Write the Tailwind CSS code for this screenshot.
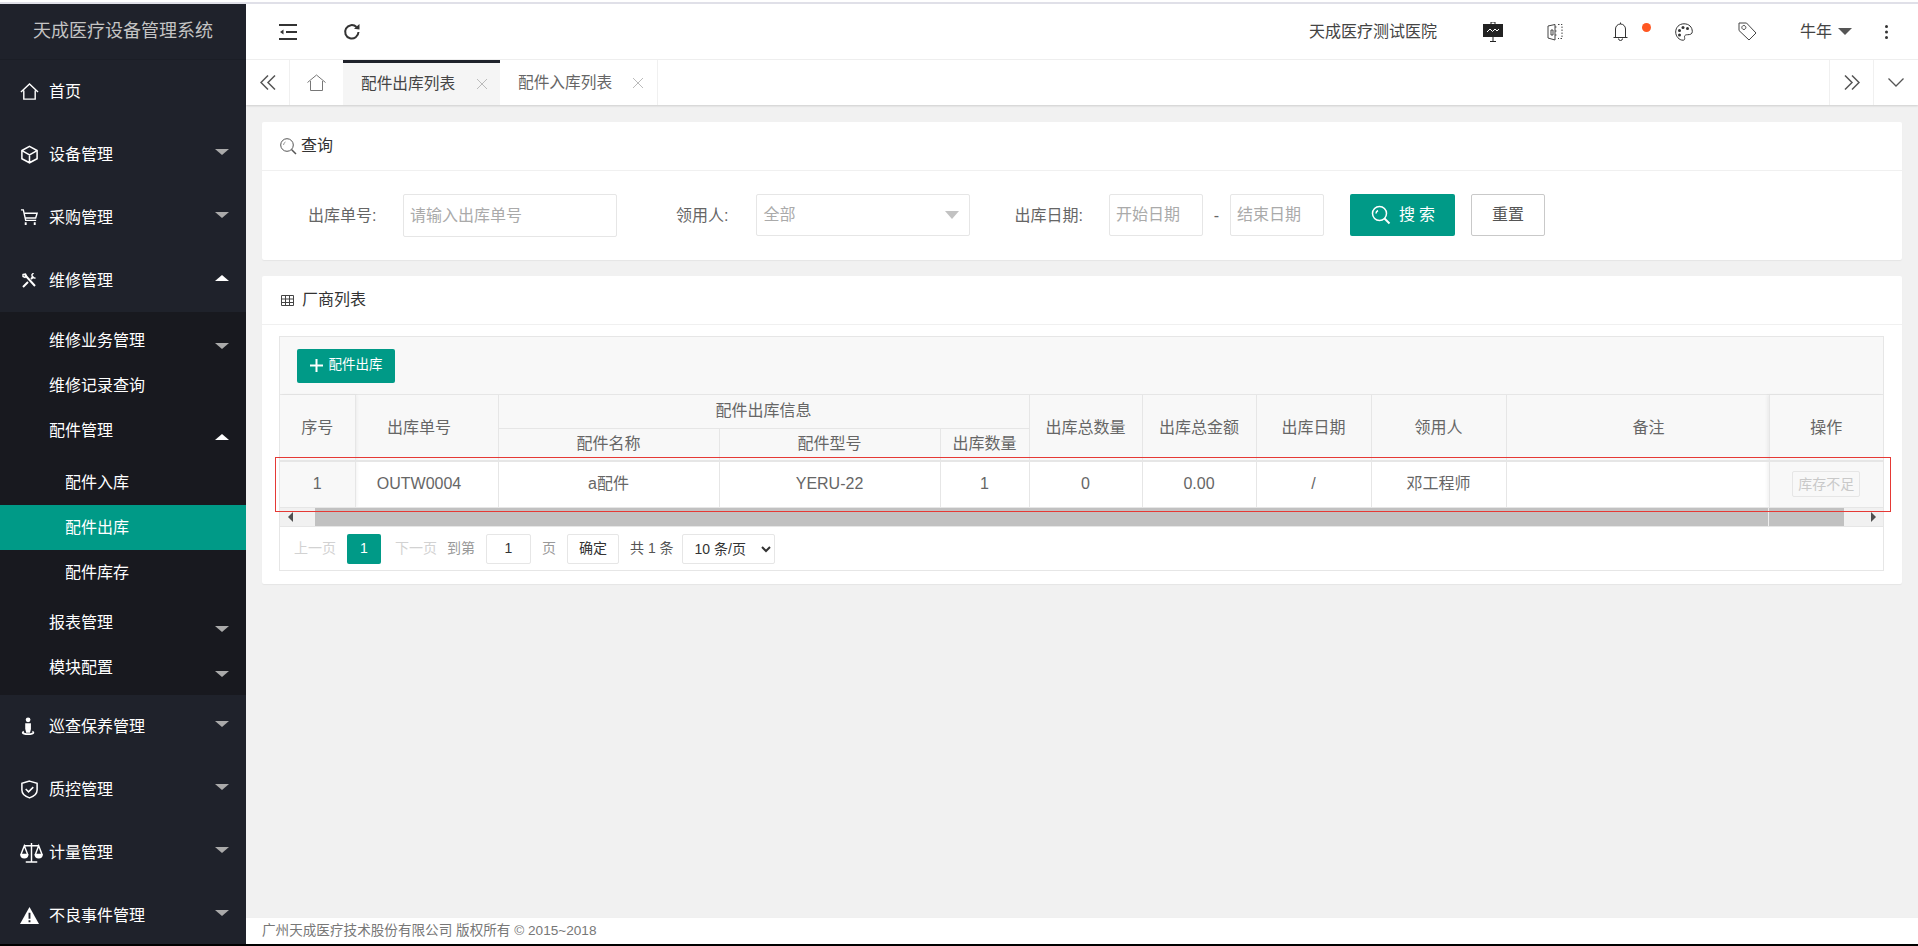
<!DOCTYPE html>
<html lang="zh-CN">
<head>
    <meta charset="UTF-8">
    <title>天成医疗设备管理系统</title>
    <script src="https://cdn.jsdelivr.net/npm/@tailwindcss/browser@4"></script>
</head>
<body class="h-screen overflow-hidden bg-white font-['Liberation_Sans','Noto_Sans_CJK_SC',sans-serif] text-[16px] text-[#666]">
<div class="flex h-[946px] flex-col">
    <div class="mt-[2px] h-[2px] shrink-0 bg-[#e0e0e8]"></div>
    <div class="flex min-h-0 flex-1">
        <!-- sidebar -->
        <aside class="flex w-[246px] shrink-0 flex-col overflow-hidden bg-[#1f222b] text-white">
            <div class="flex h-[56px] shrink-0 items-center justify-center border-b border-[#1b1e26] text-[18px] text-[#c4c4c4]">天成医疗设备管理系统</div>
            <a class="flex h-[63px] shrink-0 items-center pl-[20px]">
                <svg class="mr-[10px] h-[19px] w-[19px]" viewBox="0 0 20 20" fill="none" stroke="#fff" stroke-width="1.5"><path d="M1 10.500 10 2l9 8.500M4 9v9h12V9"/></svg>首页
            </a>
            <a class="flex h-[63px] shrink-0 items-center pl-[20px]">
                <svg class="mr-[10px] h-[19px] w-[19px]" viewBox="0 0 20 20" fill="none" stroke="#fff" stroke-width="1.6"><path d="M10 1.500 18 5.800v8.600L10 18.700 2 14.400V5.800zM3 6.500l7 4 7-4M10 10.500v7.500"/></svg>设备管理
                <span class="mr-[17px] mt-[-6px] ml-auto h-0 w-0 border-x-[7px] border-t-[6px] border-x-transparent border-t-[#aaa]"></span>
            </a>
            <a class="flex h-[63px] shrink-0 items-center pl-[20px]">
                <svg class="mr-[10px] h-[19px] w-[19px]" viewBox="0 0 20 20" fill="none" stroke="#fff" stroke-width="1.5"><path d="M1 2h2.500l2.500 11h11M5 5.500h13l-1.500 5H6"/><path d="M6 15v3M15.500 15v3" stroke-width="2"/></svg>采购管理
                <span class="mr-[17px] mt-[-6px] ml-auto h-0 w-0 border-x-[7px] border-t-[6px] border-x-transparent border-t-[#aaa]"></span>
            </a>
            <a class="flex h-[63px] shrink-0 items-center pl-[22px]">
                <svg class="mr-[12px] h-[15px] w-[15px]" viewBox="0 0 15 15" fill="none" stroke="#fff" stroke-width="2"><path d="M1 14 6 9M9 6l2.500-2.500M3 2l10 11"/><path d="M1 1.500 3.500 1 4.500 3 3 4.500 1 3.500zM13.500 5a3 3 0 0 1-3.500-3.500L11.500 0" stroke-width="1.400"/></svg>维修管理
                <span class="mr-[17px] mt-[-6px] ml-auto h-0 w-0 border-x-[7px] border-b-[6px] border-x-transparent border-b-white"></span>
            </a>
            <div class="flex h-[383px] shrink-0 flex-col bg-[#18191f] pt-[6px]">
                <a class="flex h-[45px] shrink-0 items-center pl-[49px]">维修业务管理
                    <span class="mr-[17px] mt-[10px] ml-auto h-0 w-0 border-x-[7px] border-t-[6px] border-x-transparent border-t-[#aaa]"></span>
                </a>
                <a class="flex h-[45px] shrink-0 items-center pl-[49px]">维修记录查询</a>
                <a class="flex h-[45px] shrink-0 items-center pl-[49px]">配件管理
                    <span class="mr-[17px] mt-[12px] ml-auto h-0 w-0 border-x-[7px] border-b-[6px] border-x-transparent border-b-white"></span>
                </a>
                <div class="pt-[7px] pb-[5px]">
                    <a class="flex h-[45px] items-center pl-[65px]">配件入库</a>
                    <a class="flex h-[45px] items-center bg-[#009a87] pl-[65px]">配件出库</a>
                    <a class="flex h-[45px] items-center pl-[65px]">配件库存</a>
                </div>
                <a class="flex h-[45px] shrink-0 items-center pl-[49px]">报表管理
                    <span class="mr-[17px] mt-[12px] ml-auto h-0 w-0 border-x-[7px] border-t-[6px] border-x-transparent border-t-[#aaa]"></span>
                </a>
                <a class="flex h-[45px] shrink-0 items-center pl-[49px]">模块配置
                    <span class="mr-[17px] mt-[12px] ml-auto h-0 w-0 border-x-[7px] border-t-[6px] border-x-transparent border-t-[#aaa]"></span>
                </a>
            </div>
            <a class="flex h-[63px] shrink-0 items-center pl-[20px]">
                <svg class="mr-[10px] h-[19px] w-[19px]" viewBox="0 0 20 20" fill="#fff"><circle cx="8.500" cy="3" r="2.500"/><path d="M5.500 6.500h6v6l-1 4h-4l-1-4z"/><path d="M4 14.500C1 15.500.5 19 8.500 19s7.500-3.500 4.500-4.500v1.500c1 1-8 2-9 0z"/></svg>巡查保养管理
                <span class="mr-[17px] mt-[-6px] ml-auto h-0 w-0 border-x-[7px] border-t-[6px] border-x-transparent border-t-[#aaa]"></span>
            </a>
            <a class="flex h-[63px] shrink-0 items-center pl-[20px]">
                <svg class="mr-[10px] h-[19px] w-[19px]" viewBox="0 0 20 20" fill="none" stroke="#fff" stroke-width="1.6"><path d="M10 1.200 18 3.500v7c0 4-4 7-8 8.300-4-1.300-8-4.300-8-8.300v-7zM6 9.500l3 3 5-5"/></svg>质控管理
                <span class="mr-[17px] mt-[-6px] ml-auto h-0 w-0 border-x-[7px] border-t-[6px] border-x-transparent border-t-[#aaa]"></span>
            </a>
            <a class="flex h-[63px] shrink-0 items-center pl-[20px]">
                <svg class="mr-[6px] h-[23px] w-[23px]" viewBox="0 0 24 24" fill="none" stroke="#fff" stroke-width="1.500"><path d="M12 2v19M6 22h12M4 5h16M4.500 5 1 14h7zM19.500 5 16 14h7z"/><path d="M1 14a3.500 3.500 0 0 0 7 0M16 14a3.500 3.500 0 0 0 7 0" fill="#fff"/></svg>计量管理
                <span class="mr-[17px] mt-[-6px] ml-auto h-0 w-0 border-x-[7px] border-t-[6px] border-x-transparent border-t-[#aaa]"></span>
            </a>
            <a class="flex h-[63px] shrink-0 items-center pl-[20px]">
                <svg class="mr-[10px] h-[19px] w-[19px]" viewBox="0 0 20 20"><path d="M10 1 20 19H0z" fill="#fff"/><path d="M9 7h2v6.500H9zM9 15h2v2H9z" fill="#1f222b"/></svg>不良事件管理
                <span class="mr-[17px] mt-[-6px] ml-auto h-0 w-0 border-x-[7px] border-t-[6px] border-x-transparent border-t-[#aaa]"></span>
            </a>
        </aside>

        <main class="flex min-w-0 flex-1 flex-col bg-[#f1f1f1]">
            <!-- top bar -->
            <header class="flex h-[56px] shrink-0 items-center border-b border-[#f0f0f0] bg-white text-[#444]">
                <svg class="ml-[33px] h-[18px] w-[18px]" viewBox="0 0 18 18" fill="none" stroke="#333" stroke-width="1.800"><path d="M0 2h18M7 9h11M0 16h18"/><path d="M4.500 6.500 1 9l3.500 2.500z" fill="#333" stroke="none"/></svg>
                <svg class="ml-[46px] h-[18px] w-[18px]" viewBox="0 0 18 18" fill="none" stroke="#333" stroke-width="2"><path d="M15.500 9A6.700 6.700 0 1 1 13.500 4"/><path d="M11 5.800 16.500 6.500V1z" fill="#333" stroke="none"/></svg>
                <span class="ml-auto text-[16px]">天成医疗测试医院</span>
                <svg class="ml-[46px] h-[20px] w-[20px]" viewBox="0 0 20 20"><path d="M0 2h20v13H0z" fill="#222"/><path d="M8 2V0h4v2M10 15v4M7 19.500h6" stroke="#222" fill="none"/><path d="M4 10l3-3 2.500 2.500L12 7l2 2 2-2" stroke="#fff" fill="none"/></svg>
                <svg class="ml-[44px] h-[18px] w-[16px]" viewBox="0 0 16 18" fill="none" stroke="#444"><path d="M8 1.500 1 3v12l7 2zM8 4h1.500M8 8h1.500M8 12h1.500M4 7h2v5H4z"/><path d="M11 1.500h4v14h-4" stroke-dasharray="1.500 1.500"/></svg>
                <svg class="ml-[50px] h-[19px] w-[15px]" viewBox="0 0 15 19" fill="none" stroke="#333"><path d="M.5 15.500h14M2.500 15.500V7a5 5 0 0 1 10 0v8.500M5.500 16.500a2 2 0 0 0 4 0M7.500 2V.5"/></svg>
                <span class="mb-[9px] ml-[14px] h-[9px] w-[9px] rounded-full bg-[#ff5722]"></span>
                <svg class="ml-[24px] h-[18px] w-[18px]" viewBox="0 0 18 18" fill="none" stroke="#333"><path d="M9 .8C4 .8.700 4.500.700 9c0 4.500 3.500 8.200 7.300 8.200 2.500 0 1.500-2.500 1.500-3.500 0-1.500 1.500-2 3-2 2.500 0 4.800-.5 4.800-3C17.300 4 14 .8 9 .8z"/><g fill="#333" stroke="none"><circle cx="4.500" cy="7.500" r="1.500"/><circle cx="8" cy="4.500" r="1.500"/><circle cx="12.500" cy="5.500" r="1.500"/><circle cx="4.500" cy="12" r="1.500"/></g></svg>
                <svg class="ml-[45px] h-[19px] w-[19px]" viewBox="0 0 19 19" fill="none" stroke="#444"><path d="M1 1h7.500L18 11l-7 7-10-9.500zM5.800 3.500a2 2 0 1 0 .1 0z"/></svg>
                <span class="ml-[43px] text-[16px]">牛年</span>
                <span class="ml-[6px] h-0 w-0 border-x-[7px] border-t-[7px] border-x-transparent border-t-[#555]"></span>
                <svg class="ml-[33px] mr-[30px] h-[14px] w-[3px]" viewBox="0 0 3 14" fill="#333"><circle cx="1.500" cy="1.500" r="1.500"/><circle cx="1.500" cy="7" r="1.500"/><circle cx="1.500" cy="12.500" r="1.500"/></svg>
            </header>
            <!-- tabs -->
            <nav class="flex h-[45px] shrink-0 bg-white shadow-[0_1px_2px_rgba(0,0,0,0.15)]">
                <div class="flex w-[44px] items-center justify-center border-r border-[#f0f0f0]">
                    <svg class="h-[15px] w-[16px]" viewBox="0 0 16 15" fill="none" stroke="#555" stroke-width="1.500"><path d="M8 .5 1 7.500l7 7M15 .5l-7 7 7 7"/></svg>
                </div>
                <div class="flex w-[53px] items-center justify-center">
                    <svg class="h-[17px] w-[19px]" viewBox="0 0 19 17" fill="none" stroke="#777"><path d="M.5 8.500 9.500 1l9 7.500M3.500 7v9.500h12V7"/></svg>
                </div>
                <div class="flex w-[157px] items-center justify-between border-t-[3px] border-[#1f222b] bg-[#f5f5f5] pl-[18px] pr-[13px] text-[15.7px] text-[#444]">
                    配件出库列表
                    <svg class="h-[10px] w-[10px]" viewBox="0 0 10 10" stroke="#bbb"><path d="M0 0l10 10M10 0 0 10"/></svg>
                </div>
                <div class="flex w-[158px] items-center justify-between border-r border-[#f0f0f0] pl-[18px] pr-[14px] text-[15.7px]">
                    配件入库列表
                    <svg class="h-[10px] w-[10px]" viewBox="0 0 10 10" stroke="#bbb"><path d="M0 0l10 10M10 0 0 10"/></svg>
                </div>
                <div class="ml-auto flex w-[45px] items-center justify-center border-x border-[#f0f0f0]">
                    <svg class="h-[15px] w-[16px]" viewBox="0 0 16 15" fill="none" stroke="#555" stroke-width="1.500"><path d="M8 .5l7 7-7 7M1 .5l7 7-7 7"/></svg>
                </div>
                <div class="flex w-[44px] items-center justify-center">
                    <svg class="h-[9px] w-[16px]" viewBox="0 0 16 9" fill="none" stroke="#555" stroke-width="1.300"><path d="M.5.5 8 8 15.500.5"/></svg>
                </div>
            </nav>
            <!-- content -->
            <div class="min-h-0 flex-1 px-[16px] pt-[17px]">
                <section class="h-[138px] rounded-[2px] bg-white shadow-[0_1px_1px_rgba(0,0,0,0.05)]">
                    <div class="flex h-[49px] items-center border-b border-[#f0f0f0] pl-[18px] text-[#333]">
                        <svg class="mr-[4px] h-[17px] w-[17px]" viewBox="0 0 17 17" fill="none" stroke="#555"><circle cx="7" cy="7" r="6.300"/><path d="M11.500 11.500l4.500 4.500" stroke-width="1.500"/><path d="M3.500 7a3.500 3.500 0 0 1 2-3" stroke="#999"/></svg>查询
                    </div>
                    <div class="flex h-[89px] items-start pt-[23px]">
                        <label class="ml-[46px] w-[71px] leading-[43px]">出库单号:</label>
                        <input class="ml-[24px] h-[43px] w-[214px] rounded-[2px] border border-[#e6e6e6] px-[6px] placeholder:text-[#aaa]" placeholder="请输入出库单号">
                        <label class="ml-[59px] leading-[43px]">领用人:</label>
                        <div class="ml-[28px] flex h-[42px] w-[214px] items-center justify-between rounded-[2px] border border-[#e6e6e6] px-[6px] text-[#aaa]">
                            全部
                            <span class="mr-[4px] h-0 w-0 border-x-[7px] border-t-[8px] border-x-transparent border-t-[#c2c2c2]"></span>
                        </div>
                        <label class="ml-[44px] leading-[43px]">出库日期:</label>
                        <input class="ml-[26px] h-[42px] w-[94px] rounded-[2px] border border-[#e6e6e6] px-[6px] placeholder:text-[#aaa]" placeholder="开始日期">
                        <span class="w-[27px] text-center leading-[43px]">-</span>
                        <input class="h-[42px] w-[94px] rounded-[2px] border border-[#e6e6e6] px-[6px] placeholder:text-[#aaa]" placeholder="结束日期">
                        <button class="ml-[26px] flex h-[42px] w-[105px] items-center justify-center rounded-[2px] bg-[#009a87] pl-[5px] tracking-[4px] text-white">
                            <svg class="mr-[8px] h-[20px] w-[20px]" viewBox="0 0 20 20" fill="none" stroke="#fff" stroke-width="1.500"><circle cx="8.500" cy="8.500" r="7"/><path d="M13.500 13.500l5 5" stroke-width="2"/><path d="M5 8.500a3.500 3.500 0 0 1 2-3"/></svg>搜索
                        </button>
                        <button class="ml-[16px] h-[42px] w-[74px] rounded-[2px] border border-[#c9c9c9] bg-white text-[#555]">重置</button>
                    </div>
                </section>

                <section class="mt-[16px] h-[308px] rounded-[2px] bg-white shadow-[0_1px_1px_rgba(0,0,0,0.05)]">
                    <div class="flex h-[49px] items-center border-b border-[#f0f0f0] pl-[19px] text-[#333]">
                        <svg class="mr-[8px] h-[13px] w-[13px]" viewBox="0 0 13 13" fill="none" stroke="#444"><path d="M.5 1.500h12v10H.5zM.5 5h12M.5 8.500h12M4.500 1.500v10M8.500 1.500v10"/></svg>厂商列表
                    </div>
                    <div class="relative ml-[17px] mr-[18px] mt-[11px] h-[235px] border border-[#e6e6e6]">
                        <div class="flex h-[58px] items-center border-b border-[#e6e6e6] bg-[#f8f8f8] pl-[17px]">
                            <button class="flex h-[34px] w-[98px] items-center justify-center rounded-[2px] bg-[#009a87] text-[13.5px] text-white">
                                <svg class="mr-[6px] h-[13px] w-[13px]" viewBox="0 0 13 13" stroke="#fff" stroke-width="2"><path d="M6.500 0v13M0 6.500h13"/></svg>配件出库
                            </button>
                        </div>
                        <table class="w-[1603px] table-fixed border-collapse text-center">
                            <colgroup>
                                <col class="w-[75px]"><col class="w-[143px]"><col class="w-[221px]"><col class="w-[221px]"><col class="w-[89px]"><col class="w-[113px]"><col class="w-[114px]"><col class="w-[115px]"><col class="w-[135px]"><col class="w-[263px]"><col class="w-[114px]">
                            </colgroup>
                            <thead class="bg-[#f8f8f8] font-normal">
                                <tr class="h-[33px]">
                                    <th rowspan="2" class="border-r border-b-[2px] border-[#e6e6e6] font-normal shadow-[2px_0_3px_rgba(0,0,0,0.05)]">序号</th>
                                    <th rowspan="2" class="border-r border-b-[2px] border-[#e6e6e6] pr-[15px] font-normal">出库单号</th>
                                    <th colspan="3" class="border-r border-b border-[#e6e6e6] font-normal">配件出库信息</th>
                                    <th rowspan="2" class="border-r border-b-[2px] border-[#e6e6e6] font-normal">出库总数量</th>
                                    <th rowspan="2" class="border-r border-b-[2px] border-[#e6e6e6] font-normal">出库总金额</th>
                                    <th rowspan="2" class="border-r border-b-[2px] border-[#e6e6e6] font-normal">出库日期</th>
                                    <th rowspan="2" class="border-r border-b-[2px] border-[#e6e6e6] font-normal">领用人</th>
                                    <th rowspan="2" class="border-r border-b-[2px] border-[#e6e6e6] pl-[22px] font-normal">备注</th>
                                    <th rowspan="2" class="border-b-[2px] border-[#e6e6e6] font-normal shadow-[-2px_0_3px_rgba(0,0,0,0.05)]">操作</th>
                                </tr>
                                <tr class="h-[33px]">
                                    <th class="border-r border-b-[2px] border-[#e6e6e6] font-normal">配件名称</th>
                                    <th class="border-r border-b-[2px] border-[#e6e6e6] font-normal">配件型号</th>
                                    <th class="border-r border-b-[2px] border-[#e6e6e6] font-normal">出库数量</th>
                                </tr>
                            </thead>
                            <tbody>
                                <tr class="h-[46px]">
                                    <td class="border-r border-b border-[#e6e6e6] bg-[#f8f8f8] shadow-[2px_0_3px_rgba(0,0,0,0.05)]">1</td>
                                    <td class="border-r border-b border-[#e6e6e6] pr-[15px]">OUTW0004</td>
                                    <td class="border-r border-b border-[#e6e6e6]">a配件</td>
                                    <td class="border-r border-b border-[#e6e6e6]">YERU-22</td>
                                    <td class="border-r border-b border-[#e6e6e6]">1</td>
                                    <td class="border-r border-b border-[#e6e6e6]">0</td>
                                    <td class="border-r border-b border-[#e6e6e6]">0.00</td>
                                    <td class="border-r border-b border-[#e6e6e6]">/</td>
                                    <td class="border-r border-b border-[#e6e6e6]">邓工程师</td>
                                    <td class="border-r border-b border-[#e6e6e6]"></td>
                                    <td class="border-b border-[#e6e6e6] bg-[#f8f8f8] shadow-[-2px_0_3px_rgba(0,0,0,0.05)]">
                                        <span class="inline-block h-[26px] w-[68px] rounded-[2px] border border-[#e6e6e6] text-[14px] leading-[24px] text-[#c9c9c9]">库存不足</span>
                                    </td>
                                </tr>
                            </tbody>
                        </table>
                        <!-- scrollbar -->
                        <div class="flex h-[19px] items-center border-b border-[#e6e6e6] bg-[#f1f1f1]">
                            <span class="ml-[8px] h-0 w-0 border-y-[5px] border-r-[5px] border-y-transparent border-r-[#505050]"></span>
                            <div class="ml-[22px] flex h-full w-[1529px] bg-[#c1c1c1]"><div class="w-[1454px] border-r border-[#eee]"></div></div>
                            <span class="ml-[27px] h-0 w-0 border-y-[5px] border-l-[5px] border-y-transparent border-l-[#505050]"></span>
                        </div>
                        <!-- pagination -->
                        <div class="flex h-[44px] items-center text-[14px]">
                            <span class="ml-[14px] text-[#d2d2d2]">上一页</span>
                            <span class="ml-[11px] flex h-[30px] w-[34px] items-center justify-center rounded-[2px] bg-[#009a87] text-white">1</span>
                            <span class="ml-[14px] text-[#d2d2d2]">下一页</span>
                            <span class="ml-[10px] text-[#999]">到第</span>
                            <span class="ml-[11px] flex h-[30px] w-[45px] items-center justify-center rounded-[2px] border border-[#e6e6e6] text-[#333]">1</span>
                            <span class="ml-[11px] text-[#999]">页</span>
                            <button class="ml-[11px] h-[30px] w-[52px] rounded-[2px] border border-[#e6e6e6] text-[#333]">确定</button>
                            <span class="ml-[11px] text-[#555]">共 1 条</span>
                            <select class="ml-[8px] h-[30px] w-[93px] rounded-[2px] border border-[#e6e6e6] bg-white pl-[8px] text-[#333]"><option>10 条/页</option></select>
                        </div>
                        <!-- annotation box -->
                        <div class="absolute left-[-5px] top-[120px] h-[55px] w-[1616px] border border-[#e53935]"></div>
                    </div>
                </section>
            </div>
            <footer class="flex h-[27px] shrink-0 items-center border-t border-[#f0f0f0] bg-white pl-[16px] text-[13.6px] text-[#777]">广州天成医疗技术股份有限公司 版权所有 © 2015~2018</footer>
        </main>
    </div>
    <div class="h-[2px] shrink-0 bg-black"></div>
</div>
</body>
</html>
